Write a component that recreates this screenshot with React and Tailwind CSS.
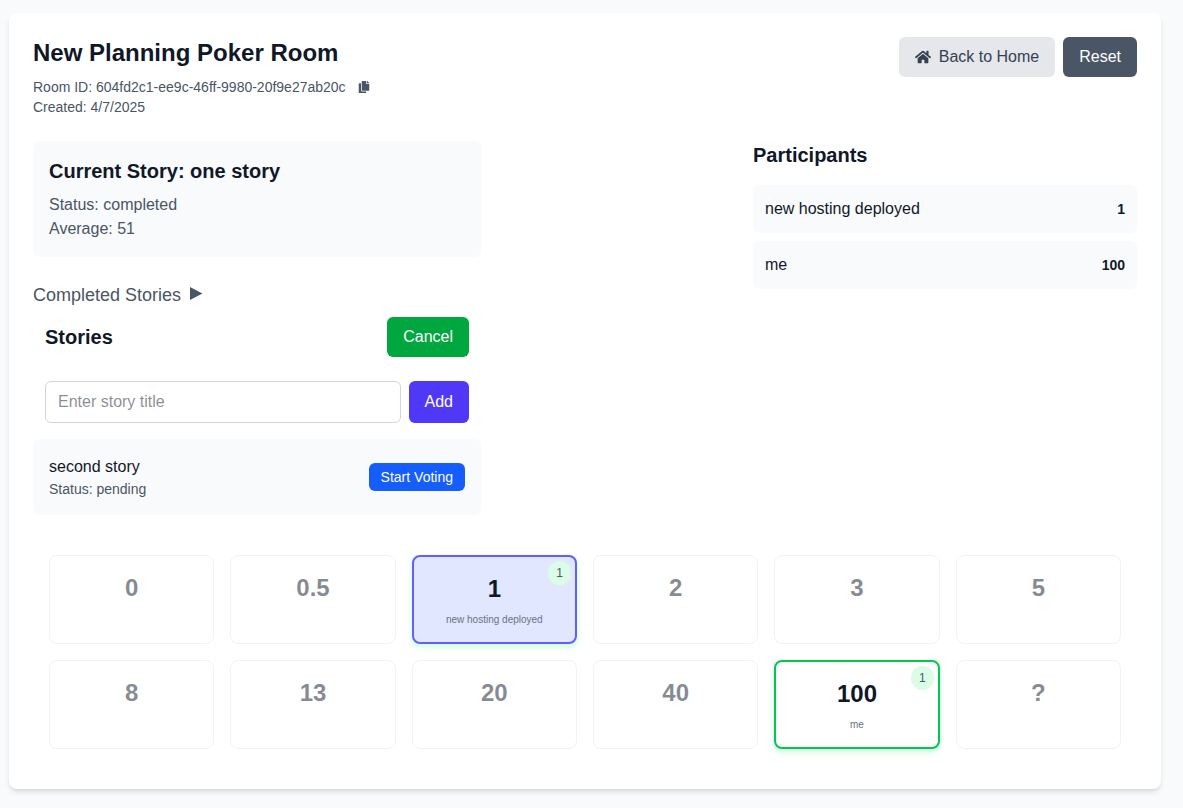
import { useState } from "react";
import { FaCopy, FaHome } from "react-icons/fa";

const participants = [
  { name: "new hosting deployed", vote: "1" },
  { name: "me", vote: "100" },
];

const deck = ["0", "0.5", "1", "2", "3", "5", "8", "13", "20", "40", "100", "?"];
const ownVote = "1";

function Header() {
  return (
    <header className="mb-6 flex items-start justify-between">
      <div>
        <h1 className="mb-2 text-2xl font-bold">New Planning Poker Room</h1>
        <div className="flex items-center gap-3 text-sm text-gray-600">
          <p>Room ID: 604fd2c1-ee9c-46ff-9980-20f9e27ab20c</p>
          <button type="button" aria-label="Copy room ID">
            <FaCopy className="size-3" />
          </button>
        </div>
        <p className="text-sm text-gray-600">Created: 4/7/2025</p>
      </div>
      <div className="flex gap-2">
        <a
          href="#home"
          className="flex items-center gap-2 rounded-md bg-gray-200 px-4 py-2 text-gray-700"
        >
          <FaHome className="size-4" />
          Back to Home
        </a>
        <button type="button" className="rounded-md bg-gray-600 px-4 py-2 text-white">
          Reset
        </button>
      </div>
    </header>
  );
}

function Stories() {
  const [title, setTitle] = useState("");
  return (
    <section>
      <div className="px-3">
        <div className="mb-6 flex items-center justify-between">
          <h2 className="text-xl font-semibold">Stories</h2>
          <button type="button" className="rounded-md bg-green-600 px-4 py-2 text-white">
            Cancel
          </button>
        </div>
        <form className="mb-4 flex gap-2" onSubmit={(e) => e.preventDefault()}>
          <input
            type="text"
            aria-label="Story title"
            placeholder="Enter story title"
            value={title}
            onChange={(e) => setTitle(e.target.value)}
            className="min-w-0 flex-1 rounded-md border border-gray-300 px-3 py-2 placeholder:text-gray-900/50"
          />
          <button type="submit" className="rounded-md bg-indigo-600 px-4 py-2 text-white">
            Add
          </button>
        </form>
      </div>
      <div className="flex items-center justify-between rounded-md bg-gray-50 p-4">
        <div>
          <h3>second story</h3>
          <p className="text-sm text-gray-600">Status: pending</p>
        </div>
        <button type="button" className="rounded-md bg-blue-600 px-3 py-1 text-sm text-white">
          Start Voting
        </button>
      </div>
    </section>
  );
}

function Participants() {
  return (
    <section className="w-96">
      <h2 className="mb-4 text-xl font-semibold">Participants</h2>
      <ul className="flex flex-col gap-2">
        {participants.map((p) => (
          <li key={p.name} className="flex items-center justify-between rounded-md bg-gray-50 p-3">
            <span>{p.name}</span>
            <span className="text-sm font-bold">{p.vote}</span>
          </li>
        ))}
      </ul>
    </section>
  );
}

function VoteCard({ value }) {
  const voters = participants.filter((p) => p.vote === value);
  if (voters.length === 0) {
    return (
      <button
        type="button"
        disabled
        className="flex flex-col items-center rounded-lg border border-gray-200 p-4 opacity-50"
      >
        <span className="text-2xl font-bold">{value}</span>
      </button>
    );
  }
  return (
    <button
      type="button"
      className={
        value === ownVote
          ? "relative flex flex-col items-center rounded-lg border-2 border-indigo-500 bg-indigo-100 p-4 shadow-[0_4px_6px_var(--color-green-100),0_2px_4px_var(--color-green-100)]"
          : "relative flex flex-col items-center rounded-lg border-2 border-green-500 bg-white p-4 shadow-[0_4px_6px_var(--color-green-100),0_2px_4px_var(--color-green-100)]"
      }
    >
      <span className="text-2xl font-bold">{value}</span>
      <span className="mt-2 text-[10px] leading-[13px] text-gray-500">
        {voters.map((v) => v.name).join(", ")}
      </span>
      <span className="absolute top-1 right-1 rounded-full bg-green-100 px-2 py-1 text-xs text-gray-600">
        {voters.length}
      </span>
    </button>
  );
}

export default function App() {
  return (
    <div className="min-h-screen bg-gray-50 pt-[13px] pr-[22px] pb-[18px] pl-[9px] font-['Liberation_Sans',Arial,sans-serif] text-gray-900">
      <main className="mx-auto max-w-6xl rounded-lg bg-white p-6 shadow-md">
        <Header />
        <div className="flex items-start justify-between gap-8">
          <div className="w-full max-w-md">
            <section className="mb-6 rounded-md bg-gray-50 p-4">
              <h2 className="mb-2 text-xl font-semibold">Current Story: one story</h2>
              <p className="text-gray-600">Status: completed</p>
              <p className="text-gray-600">Average: 51</p>
            </section>
            <button
              type="button"
              aria-expanded="false"
              className="mb-2 flex items-center gap-2 text-lg text-gray-600"
            >
              Completed Stories
              <svg viewBox="0 0 14 18" className="h-[18px] w-3.5 fill-current" aria-hidden="true">
                <path d="M1 1L13.4 7.5L1 14Z" />
              </svg>
            </button>
            <Stories />
          </div>
          <Participants />
        </div>
        <section className="mt-6 grid auto-rows-fr grid-cols-6 gap-4 p-4">
          {deck.map((value) => (
            <VoteCard key={value} value={value} />
          ))}
        </section>
      </main>
    </div>
  );
}
